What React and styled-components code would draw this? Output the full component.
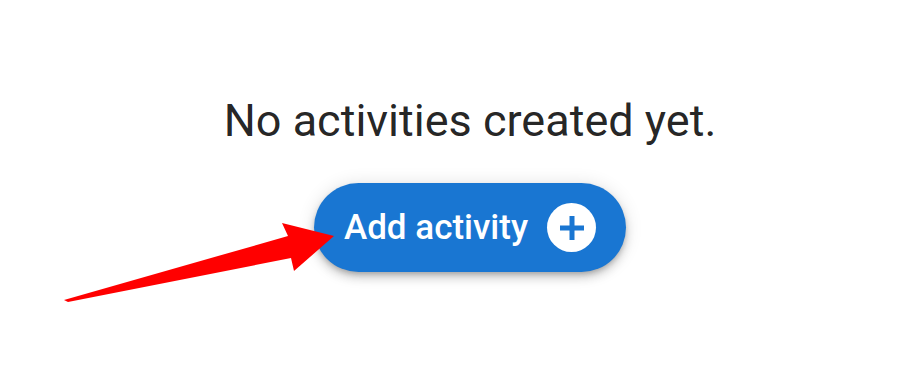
import styled, { createGlobalStyle } from "styled-components";

const GlobalStyle = createGlobalStyle`
  html, body {
    margin: 0;
    padding: 0;
    background: #fff;
    font-family: Roboto, "Liberation Sans", sans-serif;
  }
`;

const Page = styled.div`
  position: relative;
  width: 918px;
  height: 365px;
  overflow: hidden;
  display: flex;
  flex-direction: column;
  align-items: center;
  padding: 94px 0 0 22px;
  box-sizing: border-box;
  gap: 35px;
`;

const Title = styled.h1`
  margin: 0;
  font-size: 45px;
  line-height: 54px;
  font-weight: 400;
  color: rgba(0, 0, 0, 0.87);
`;

const AddButton = styled.button`
  display: flex;
  align-items: center;
  gap: 19px;
  height: 89px;
  padding: 0 30px 0 30px;
  border: none;
  border-radius: 45px;
  background: #1976d2;
  color: #fff;
  font-family: inherit;
  font-size: 35px;
  font-weight: 500;
  box-shadow: 0 3px 5px -1px rgba(0, 0, 0, 0.2), 0 6px 10px 0 rgba(0, 0, 0, 0.14),
    0 1px 18px 0 rgba(0, 0, 0, 0.12);
  cursor: pointer;
`;

const PlusCircle = styled.span`
  display: flex;
  align-items: center;
  justify-content: center;
  width: 49px;
  height: 49px;
  border-radius: 50%;
  background: #fff;
`;

const Arrow = styled.svg`
  position: absolute;
  left: 0;
  top: 0;
  pointer-events: none;
`;

export default function App() {
  return (
    <>
      <GlobalStyle />
      <Page>
        <Title>No activities created yet.</Title>
        <AddButton>
          Add activity
          <PlusCircle>
            <svg width="26" height="26" viewBox="0 0 26 26">
              <path d="M13 1v24M1 13h24" stroke="#1976d2" strokeWidth="5" />
            </svg>
          </PlusCircle>
        </AddButton>
        <Arrow width="918" height="365" viewBox="0 0 918 365">
          <polygon
            points="64,300 288,236 282,223 334,236 294,271 291,258 68,302"
            fill="#ff0000"
          />
        </Arrow>
      </Page>
    </>
  );
}
